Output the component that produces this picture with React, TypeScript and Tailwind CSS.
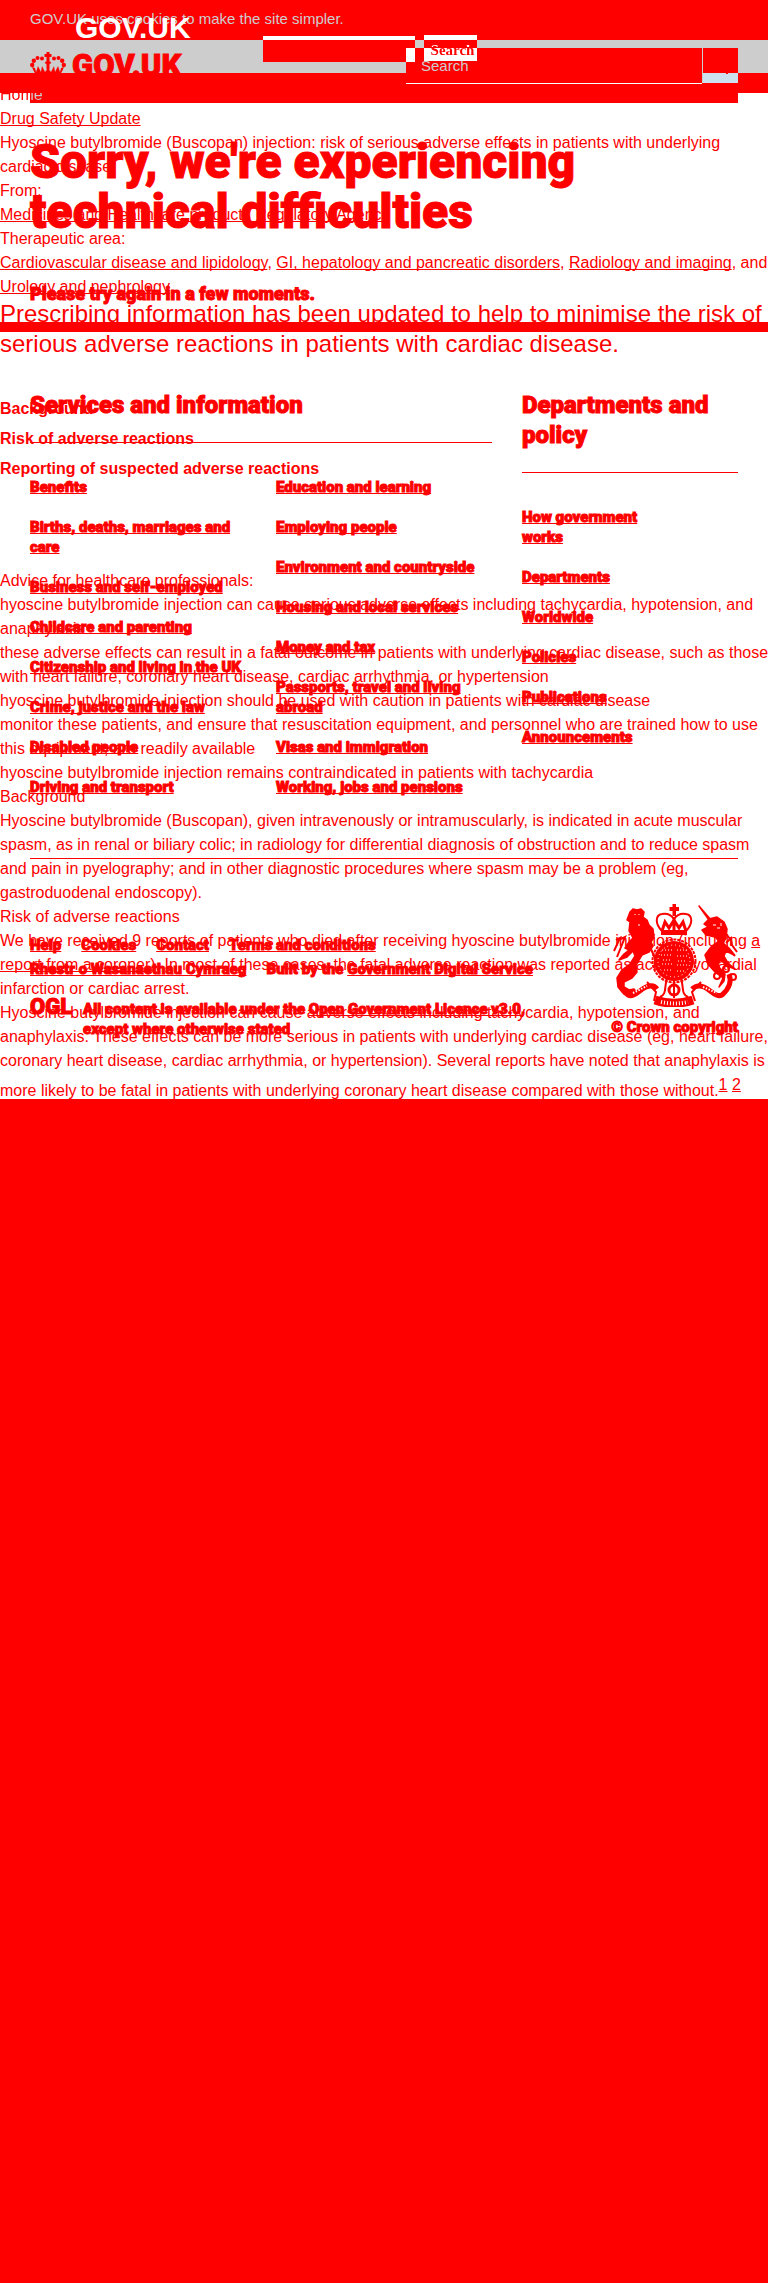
import type { ReactNode } from "react";

const services = [
  ["Benefits", "Births, deaths, marriages and care", "Business and self-employed", "Childcare and parenting", "Citizenship and living in the UK", "Crime, justice and the law", "Disabled people", "Driving and transport"],
  ["Education and learning", "Employing people", "Environment and countryside", "Housing and local services", "Money and tax", "Passports, travel and living abroad", "Visas and immigration", "Working, jobs and pensions"],
];
const departments = ["How government works", "Departments", "Worldwide", "Policies", "Publications", "Announcements"];

function A({ children }: { children: ReactNode }) {
  return <a href="#" className="underline underline-offset-1 [text-decoration-skip-ink:none] [text-decoration-thickness:1px]">{children}</a>;
}

function LinkList({ items, className = "" }: { items: string[]; className?: string }) {
  return (
    <ul className={"flex flex-col gap-5 text-[15px] leading-5 " + className}>
      {items.map((t) => (
        <li key={t}><A>{t}</A></li>
      ))}
    </ul>
  );
}

function Crown() {
  return (
    <svg width="36" height="26" viewBox="0 0 36 26" className="shrink-0" fill="#f00">
      <path d="M16.500 0h3v2h2v3h-2v4l2 2-2 1v5l-1.500 2-1.500-2v-5l-2-1 2-2V5h-2V2h2z" />
      <circle cx="12" cy="6.500" r="2" /><circle cx="24" cy="6.500" r="2" />
      <circle cx="7.500" cy="6" r="2" /><circle cx="28.500" cy="6" r="2" />
      <circle cx="3.800" cy="8.800" r="2.200" /><circle cx="32.200" cy="8.800" r="2.200" />
      <circle cx="2.200" cy="13" r="2.200" /><circle cx="33.800" cy="13" r="2.200" />
      <path d="M2 15c1 3 3 6 5 10h22c2-4 4-7 5-10l-3 1-1 4-2-6-3 6-1-6-3 6-3-4-3 4-3-6-1 6-3-6-2 6-1-4z" />
    </svg>
  );
}

function Arms() {
  return (
    <svg width="125" height="103" viewBox="0 0 125 103" fill="#f00" stroke="none" role="img" aria-label="Royal coat of arms">
      <path d="M59.500 0h3.500v3h3v4h-3v5h-3.500V7h-3V3h3z" />
      <g fill="none" stroke="#f00" strokeWidth="2">
        <path d="M49 27C42 20 42 11 49 10c6-1 10 2 12 5 2-3 6-6 12-5 7 1 7 10 0 17" />
        <path d="M61 13v14M49 27l3-9 4 6 5-8 5 8 4-6 3 9" strokeWidth="3" />
      </g>
      <path d="M48 26h26v5H48z" />
      <g stroke="#f00" strokeWidth="1.500" strokeLinejoin="round">
        <path d="M17 8l3-3 4 1 4-1 3 3-1 5 4 3 2 5 4 4 1 8-3 5 2 4-4 6-7 3-6 10 1 7-5 6-8 4v5l5 3 5-1 3 4-5 3-8-2-6-7-1-9 5-8 8-6 5-8-2-5-6 6-8 3 5-6 5-4-4-2 4-6 4-4-4-7 1-9-3-2z" />
        <path d="M86 2l19 22-2 2zM91 20l5-5 8-2 7 5 3 7-1 9-3 5 6 5 5 7-8-4-2 5 4 7 7 6-8-3-7-7-2 7 7 8-1 7-5 6 4-9-8-6-7-8-3-9 6-8 8-6-4-4-9-2-4-5 6-3z" />
      </g>
      <path d="M3 36l4-2-6 13M8 35l4-2-8 20M30 41l-8 11M38 45l6 14" fill="none" stroke="#f00" strokeWidth="2" />
      <path d="M113 39l5-5 1 7 5 7M117 46l5 6M111 27l6 8" fill="none" stroke="#f00" strokeWidth="2" />
      <circle cx="61" cy="57" r="20" />
      <circle cx="61" cy="57" r="21.500" fill="none" stroke="#f00" strokeWidth="2" strokeDasharray="3 1" />
      <g fill="none" stroke="#fff" strokeWidth="1">
        <circle cx="61" cy="57" r="16" strokeDasharray="1 3" />
        <path d="M49 46h10M64 46h10M48 51h11M64 52h11M49 60h10M64 61h11M51 66h9M64 67h8M50 56h8M65 57h9" strokeDasharray="1 2" />
        <path d="M22 10v1M26 10v1M25 21h2M100 21h3M104 24h3M108 19v3" />
      </g>
      <g fill="none" stroke="#f00">
        <path d="M8 72c-3 8 0 14 7 19 6 3 11-5 18-8 5-2 9-1 11 2M116 70c3 8 0 15-7 21-6 3-11-5-18-8-5-2-9-1-12 2" strokeWidth="5" />
        <path d="M34 78l9 10-2 9M88 78l-9 10 3 9M54 74c-3 10 0 16-7 19M68 74c3 10 0 16 7 19" strokeWidth="2" />
        <path d="M42 96c12 4 26 4 38 0" strokeWidth="9" />
        <circle cx="104" cy="72" r="3" strokeWidth="2" /><circle cx="113" cy="65" r="3" strokeWidth="2" /><circle cx="120" cy="73" r="3" strokeWidth="2" />
        <circle cx="61" cy="86" r="5" strokeWidth="3" /><path d="M61 76v18" strokeWidth="2" />
      </g>
      <g fill="none" stroke="#fff" strokeWidth="2">
        <path d="M20 89l14-7M90 83l14 6" strokeDasharray="1.500 1.500" />
        <path d="M48 98c9 2 18 2 27 0" strokeWidth="4" strokeDasharray="1 2" />
      </g>
    </svg>
  );
}

function Header() {
  return (
    <header className="relative w-full self-start [grid-area:1/1]">
      <div className="h-10 bg-[#f00]" />
      <div className="flex h-[33px] items-start gap-1.5 overflow-hidden bg-[#cdcdcd] pl-[30px] pt-3">
        <Crown />
        <a href="#" className="font-[Roboto] text-[31px] font-black leading-[28px] text-[#f00] [-webkit-text-stroke:1px_#f00]">GOV.UK</a>
      </div>
      <div className="h-5 bg-[#f00]" />
      <div className="mr-[30px] ml-[30px] h-2.5 bg-[#f00]" />

      <p className="absolute left-[30px] top-[7px] text-[15px] leading-6 text-[#cdcdcd]">GOV.UK uses cookies to make the site simpler.</p>
      <a href="#" className="absolute left-[75px] top-[11px] text-[30px] font-bold leading-[34px] text-white">GOV.UK</a>

      <input aria-label="Search GOV.UK" className="absolute right-[353px] top-9 h-[26px] w-[152px] bg-[linear-gradient(#fff_4px,#f00_4px)]" />
      <div className="absolute right-[30px] top-12 flex h-9 w-[332px]">
        <label htmlFor="q" className="sr-only">Search the site</label>
        <input id="q" placeholder="Search" className="min-w-0 flex-1 border-b border-white bg-[#f00] pl-[15px] text-[15px] leading-6 text-[#cdcdcd] placeholder:text-[#cdcdcd]" />
        <button aria-label="Submit search" className="h-[35px] w-9 border-l border-[#cdcdcd] bg-[linear-gradient(#f00_25px,#cde0ee_25px)]">
          <svg width="35" height="35" viewBox="0 0 35 35" fill="#f00"><path d="M23 24h2v2h-2z" /></svg>
        </button>
      </div>
      <div className="absolute right-[353px] top-12 h-3.5 w-[9px] bg-white" />
      <button className="absolute right-[291px] top-[35px] h-[26px] w-[53px] bg-[linear-gradient(#fff_5px,#f00_5px,#f00_13px,#fff_13px)]">
        <span className="block bg-[linear-gradient(#fff_9px,#f00_9px)] bg-clip-text pt-1 pl-1 font-['Liberation_Serif',serif] text-[15px] font-bold leading-4 text-transparent">Search</span>
      </button>
    </header>
  );
}

function Article() {
  return (
    <article className="w-full pt-[93px] text-base leading-6 [grid-area:1/1]">
      <p className="relative flex h-3.5 items-end overflow-hidden">
        <a href="#" className="bg-[linear-gradient(to_right,#f00_30px,#cdcdcd_30px)] bg-clip-text text-transparent underline underline-offset-1">Home</a>
      </p>
      <p><A>Drug Safety Update</A></p>
      <p>Hyoscine butylbromide (Buscopan) injection: risk of serious adverse effects in patients with underlying cardiac disease</p>
      <dl>
        <dt>From:</dt>
        <dd><A>Medicines and Healthcare products Regulatory Agency</A></dd>
        <dt>Therapeutic area:</dt>
        <dd><A>Cardiovascular disease and lipidology</A>, <A>GI, hepatology and pancreatic disorders</A>, <A>Radiology and imaging</A>, and <A>Urology and nephrology</A></dd>
      </dl>
      <p className="text-2xl leading-[30px]">Prescribing information has been updated to help to minimise the risk of serious adverse reactions in patients with cardiac disease.</p>
      <ul className="pb-[85px] pt-[35px] font-bold leading-[30px]">
        <li>Background</li>
        <li>Risk of adverse reactions</li>
        <li>Reporting of suspected adverse reactions</li>
      </ul>
      <p>Advice for healthcare professionals:</p>
      <ul>
        <li>hyoscine butylbromide injection can cause serious adverse effects including tachycardia, hypotension, and anaphylaxis</li>
        <li className="-mr-2">these adverse effects can result in a fatal outcome in patients with underlying cardiac disease, such as those with heart failure, coronary heart disease, cardiac arrhythmia, or hypertension</li>
        <li>hyoscine butylbromide injection should be used with caution in patients with cardiac disease</li>
        <li>monitor these patients, and ensure that resuscitation equipment, and personnel who are trained how to use this equipment, are readily available</li>
        <li>hyoscine butylbromide injection remains contraindicated in patients with tachycardia</li>
      </ul>
      <h2>Background</h2>
      <p>Hyoscine butylbromide (Buscopan), given intravenously or intramuscularly, is indicated in acute muscular spasm, as in renal or biliary colic; in radiology for differential diagnosis of obstruction and to reduce spasm and pain in pyelography; and in other diagnostic procedures where spasm may be a problem (eg, gastroduodenal endoscopy).</p>
      <h2>Risk of adverse reactions</h2>
      <p>We have received 9 reports of patients who died after receiving hyoscine butylbromide injection (including <A>a report from a coroner</A>). In most of these cases, the fatal adverse reaction was reported as acute myocardial infarction or cardiac arrest.</p>
      <p>Hyoscine butylbromide injection can cause adverse effects including tachycardia, hypotension, and anaphylaxis. These effects can be more serious in patients with underlying cardiac disease (eg, heart failure, coronary heart disease, cardiac arrhythmia, or hypertension). Several reports have noted that anaphylaxis is more likely to be fatal in patients with underlying coronary heart disease compared with those without.<span className="align-super"><A>1</A> <A>2</A></span></p>
    </article>
  );
}

function ErrorPage() {
  return (
    <div className="w-full pt-[137px] font-[Roboto] font-black [-webkit-text-stroke:1px_#f00] [grid-area:1/1]">
      <main>
        <h1 className="max-w-[640px] px-[30px] text-5xl leading-[50px]">Sorry, we're experiencing technical difficulties</h1>
        <p className="mt-[47px] px-[30px] text-lg leading-5">Please try again in a few moments.</p>
      </main>
      <footer>
        <div className="mt-[18px] h-2.5 bg-[#f00]" />
        <div className="px-[30px]">
          <div className="mt-[58px] grid grid-cols-[minmax(0,462fr)_minmax(0,216fr)] gap-[30px]">
            <section>
              <h2 className="border-b border-[#f00] pb-[22px] text-2xl leading-[30px]">Services and information</h2>
              <div className="mt-[34px] grid grid-cols-[246fr_216fr]">
                <LinkList items={services[0]} className="pr-[30px]" />
                <LinkList items={services[1]} />
              </div>
            </section>
            <section>
              <h2 className="border-b border-[#f00] pb-[22px] text-2xl leading-[30px]">Departments and policy</h2>
              <LinkList items={departments} className="mt-[34px] max-w-[150px]" />
            </section>
          </div>
          <hr className="mt-[61px] border-[#f00]" />
          <div className="flex items-start justify-between pt-[45px]">
            <div className="pt-[29px] text-[15px]">
              <ul className="flex max-w-[540px] flex-wrap gap-x-5 leading-6">
                <li><A>Help</A></li>
                <li><A>Cookies</A></li>
                <li><A>Contact</A></li>
                <li className="mr-24"><A>Terms and conditions</A></li>
                <li><A>Rhestr o Wasanaethau Cymraeg</A></li>
                <li>Built by the <A>Government Digital Service</A></li>
              </ul>
              <div className="mt-[18px] flex gap-2.5 leading-5">
                <span className="w-[43px] text-[22px] leading-4">OGL</span>
                <p>All content is available under the <A>Open Government Licence v3.0</A>,<br />except where otherwise stated</p>
              </div>
            </div>
            <a href="#" className="flex flex-col items-end gap-2.5 whitespace-nowrap text-[15px] leading-5">
              <Arms />
              <span>© Crown copyright</span>
            </a>
          </div>
        </div>
      </footer>
    </div>
  );
}

export default function App() {
  return (
    <div className="flex min-h-screen flex-col overflow-x-hidden bg-white font-['Liberation_Sans',sans-serif] text-[#f00]">
      <div className="grid grid-cols-[minmax(0,1fr)] items-start">
        <Header />
        <Article />
        <ErrorPage />
      </div>
      <div className="relative -mt-1 flex-1 bg-[#f00]" />
    </div>
  );
}
